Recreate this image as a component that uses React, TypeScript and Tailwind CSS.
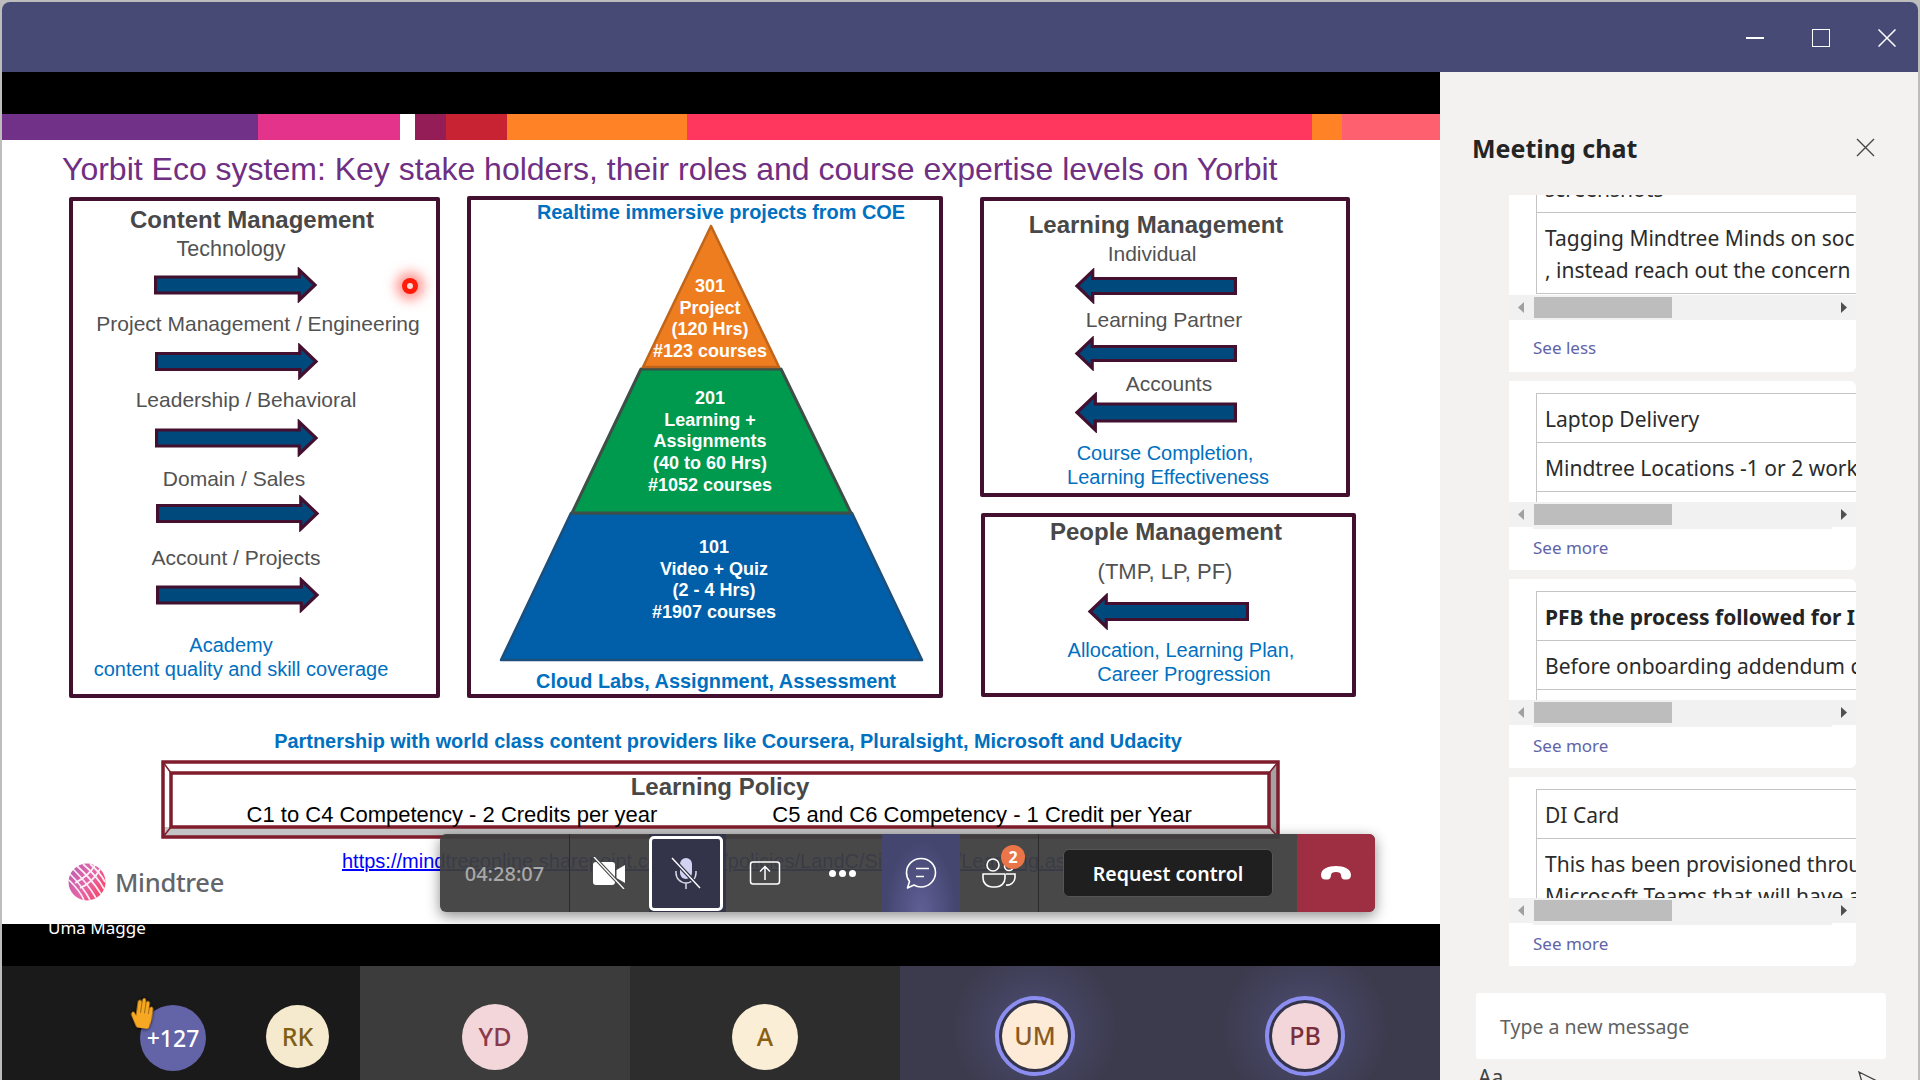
import { FaHandPaper } from "react-icons/fa";

const ARROW_STROKE = "#43102f";
const ARROW_FILL = "#00497c";

// block arrow from the slide, drawn inside its own box
function Arrow({ className, w, h, shaft, flip }: { className: string; w: number; h: number; shaft: number; flip?: boolean }) {
  const top = (h - shaft) / 2;
  const head = h * 0.52;
  const pts = [
    [1.5, top + 1.5],
    [w - head, top + 1.5],
    [w - head, 3],
    [w - 3, h / 2],
    [w - head, h - 3],
    [w - head, h - top - 1.5],
    [1.5, h - top - 1.5],
  ];
  const points = pts.map(([x, y]) => `${flip ? w - x : x},${y}`).join(" ");
  return (
    <svg className={className} width={w} height={h} viewBox={`0 0 ${w} ${h}`}>
      <polygon points={points} fill={ARROW_FILL} stroke={ARROW_STROKE} strokeWidth="3.2" />
    </svg>
  );
}

function Slide() {
  const label = "absolute -translate-x-1/2 -translate-y-1/2 whitespace-nowrap";
  const grey = "text-[21px] text-[#525252]";
  const head = "text-[24px] font-bold text-[#484848]";
  const blue = "text-[20px] text-[#0070c0]";
  const blueBold = "text-[19.9px] font-bold text-[#0070c0]";
  const frame = "absolute border-4 border-[#43102f] rounded-[2px]";

  return (
    <div className="relative h-[810px] bg-white overflow-hidden font-['Liberation_Sans',Arial,sans-serif]">
      {/* colour band */}
      <div className="flex h-[26px]">
        <div className="w-[256px] bg-[#723189]" />
        <div className="w-[142px] bg-[#e3338b]" />
        <div className="w-[15px] bg-white" />
        <div className="w-[31px] bg-[#951d57]" />
        <div className="w-[61px] bg-[#c82333]" />
        <div className="w-[180px] bg-[#ff8226]" />
        <div className="w-[625px] bg-[#ff365d]" />
        <div className="w-[30px] bg-[#ff8226]" />
        <div className="flex-1 bg-[#ff6070]" />
      </div>

      <div className="absolute left-[60px] top-[55px] -translate-y-1/2 whitespace-nowrap text-[32px] text-[#6f2f83]">
        Yorbit Eco system: Key stake holders, their roles and course expertise levels on Yorbit
      </div>

      {/* content management */}
      <div className={`${frame} left-[67px] top-[83px] w-[371px] h-[501px]`} />
      <div className={`${label} ${head} left-[250px] top-[106px]`}>Content Management</div>
      <div className={`${label} text-[21.5px] text-[#525252] left-[229px] top-[135px]`}>Technology</div>
      <Arrow className="absolute left-[152px] top-[153px]" w={164} h={36} shaft={19} />
      <div className={`${label} ${grey} left-[256px] top-[210px]`}>Project Management / Engineering</div>
      <Arrow className="absolute left-[153px] top-[229px]" w={164} h={37} shaft={19} />
      <div className={`${label} ${grey} left-[244px] top-[286px]`}>Leadership / Behavioral</div>
      <Arrow className="absolute left-[153px] top-[305px]" w={164} h={38} shaft={19} />
      <div className={`${label} ${grey} left-[232px] top-[365px]`}>Domain / Sales</div>
      <Arrow className="absolute left-[154px] top-[381px]" w={164} h={37} shaft={19} />
      <div className={`${label} ${grey} left-[234px] top-[444px]`}>Account / Projects</div>
      <Arrow className="absolute left-[154px] top-[463px]" w={164} h={36} shaft={19} />
      <div className={`${label} ${blue} left-[229px] top-[531px]`}>Academy</div>
      <div className={`${label} ${blue} left-[239px] top-[555px]`}>content quality and skill coverage</div>

      {/* pyramid */}
      <div className={`${frame} left-[465px] top-[82px] w-[476px] h-[502px]`} />
      <div className={`${label} ${blueBold} left-[719px] top-[99px]`}>Realtime immersive projects from COE</div>
      <svg className="absolute left-[488px] top-[101px]" width="440" height="455" viewBox="490 215 440 455">
        <polygon points="501,660 571,513 852,513 922,660" fill="#005fa8" stroke="#1d4f7c" strokeWidth="2.5" strokeLinejoin="round" />
        <polygon points="572,513 641,369 781,369 851,513" fill="#009a4f" stroke="#3d4f47" strokeWidth="3" strokeLinejoin="round" />
        <polygon points="711,226 643,367 779,367" fill="#ed7d1f" stroke="#bf651c" strokeWidth="2.5" strokeLinejoin="round" />
      </svg>
      <div className={`${label} left-[708px] top-[205px] text-center text-[18px] font-bold leading-[21.7px] text-white`}>
        301<br />Project<br />(120 Hrs)<br />#123 courses
      </div>
      <div className={`${label} left-[708px] top-[328px] text-center text-[18px] font-bold leading-[21.7px] text-white`}>
        201<br />Learning +<br />Assignments<br />(40 to 60 Hrs)<br />#1052 courses
      </div>
      <div className={`${label} left-[712px] top-[466px] text-center text-[18px] font-bold leading-[21.7px] text-white`}>
        101<br />Video + Quiz<br />(2 - 4 Hrs)<br />#1907 courses
      </div>
      <div className={`${label} ${blueBold} left-[714px] top-[568px]`}>Cloud Labs, Assignment, Assessment</div>

      {/* learning management */}
      <div className={`${frame} left-[978px] top-[83px] w-[370px] h-[300px]`} />
      <div className={`${label} ${head} left-[1154px] top-[111px]`}>Learning Management</div>
      <div className={`${label} ${grey} left-[1150px] top-[140px]`}>Individual</div>
      <Arrow className="absolute left-[1072px] top-[154px]" w={163} h={36} shaft={18} flip />
      <div className={`${label} ${grey} left-[1162px] top-[206px]`}>Learning Partner</div>
      <Arrow className="absolute left-[1072px] top-[222px]" w={163} h={35} shaft={17} flip />
      <div className={`${label} ${grey} left-[1167px] top-[270px]`}>Accounts</div>
      <Arrow className="absolute left-[1072px] top-[278px]" w={163} h={41} shaft={20} flip />
      <div className={`${label} ${blue} left-[1163px] top-[339px]`}>Course Completion,</div>
      <div className={`${label} ${blue} left-[1166px] top-[363px]`}>Learning Effectiveness</div>

      {/* people management */}
      <div className={`${frame} left-[979px] top-[399px] w-[375px] h-[184px]`} />
      <div className={`${label} ${head} left-[1164px] top-[418px]`}>People Management</div>
      <div className={`${label} text-[22px] text-[#525252] left-[1163px] top-[457px]`}>(TMP, LP, PF)</div>
      <Arrow className="absolute left-[1085px] top-[479px]" w={162} h={37} shaft={19} flip />
      <div className={`${label} ${blue} left-[1179px] top-[536px]`}>Allocation, Learning Plan,</div>
      <div className={`${label} ${blue} left-[1182px] top-[560px]`}>Career Progression</div>

      <div className={`${label} ${blueBold} left-[726px] top-[628px]`}>
        Partnership with world class content providers like Coursera, Pluralsight, Microsoft and Udacity
      </div>

      {/* learning policy bevel */}
      <svg className="absolute left-[158px] top-[645px]" width="1122" height="81" viewBox="160 759 1122 81">
        <rect x="163" y="762" width="1115" height="75" fill="#ffffff" />
        <polygon points="163,827 171,827 1269,827 1278,837 163,837" fill="#c4c4c4" />
        <polygon points="1269,773 1278,762 1278,837 1269,827" fill="#a3a3a3" />
        <rect x="163" y="762" width="1115" height="75" fill="none" stroke="#7f1d2c" strokeWidth="3.5" />
        <rect x="171" y="773" width="1098" height="54" fill="#ffffff" stroke="#7f1d2c" strokeWidth="3.5" />
        <path d="M163 762 L171 773 M1278 762 L1269 773 M163 837 L171 827 M1278 837 L1269 827" stroke="#7f1d2c" strokeWidth="1.5" />
      </svg>
      <div className={`${label} ${head} left-[718px] top-[673px]`}>Learning Policy</div>
      <div className={`${label} left-[450px] top-[700px] text-[22px] text-black`}>C1 to C4 Competency - 2 Credits per year</div>
      <div className={`${label} left-[980px] top-[700px] text-[22px] text-black`}>C5 and C6 Competency - 1 Credit per Year</div>

      {/* logo */}
      <svg className="absolute left-[66px] top-[749px]" width="38" height="38" viewBox="0 0 38 38">
        <defs>
          <linearGradient id="globe" x1="0" y1="0" x2="1" y2="0.6">
            <stop offset="0" stopColor="#b85cb0" />
            <stop offset="0.6" stopColor="#e565a8" />
            <stop offset="1" stopColor="#f6476d" />
          </linearGradient>
        </defs>
        <circle cx="19" cy="19" r="18.5" fill="url(#globe)" />
        <g fill="none" stroke="#ffffff" strokeWidth="1.7" opacity="0.9">
          <path d="M1 17 C8 24 13 30 16 37" />
          <path d="M2 11 C10 19 18 29 22 37" />
          <path d="M5 6 C14 15 23 26 28 35" />
          <path d="M9 3 C18 11 28 23 33 31" />
          <path d="M15 1 C23 8 32 18 36 26" />
          <path d="M22 1 C28 6 34 13 37 19" />
          <path d="M27 2 C24 8 18 14 7 20" />
          <path d="M32 6 C28 14 20 22 12 25" />
        </g>
      </svg>
      <div className="absolute left-[113px] top-[768px] -translate-y-1/2 font-['Noto_Sans',sans-serif] text-[25.5px] font-medium tracking-[-0.3px] text-[#63656a]">
        Mindtree
      </div>
      <div className="absolute left-[340px] top-[747px] -translate-y-1/2 whitespace-nowrap text-[20px] text-[#0000ff] underline">
        https://mindtreeonline.sharepoint.com/sites/policies/LandC/SitePages/Learning.aspx
      </div>

      {/* laser pointer */}
      <div className="absolute left-[400px] top-[164px] flex h-[16px] w-[16px] items-center justify-center rounded-full bg-[#ff1a0a] shadow-[0_0_12px_6px_rgba(255,70,60,0.55)]">
        <div className="h-[6px] w-[6px] rounded-full bg-[#ffd9d5]" />
      </div>
    </div>
  );
}

function CameraOff() {
  return (
    <svg width="32" height="32" viewBox="0 0 32 32">
      <rect x="0" y="5" width="22" height="23" rx="3" fill="#fff" />
      <path d="M23.5 13 L32 8 V26 L23.5 21 Z" fill="#fff" />
      <path d="M1 0 L31 32" stroke="#454545" strokeWidth="3.4" />
      <path d="M1 0 L31 32" stroke="#fff" strokeWidth="1.3" />
    </svg>
  );
}

function MicOff() {
  return (
    <svg width="32" height="32" viewBox="0 0 32 32" fill="none">
      <rect x="10" y="1" width="12" height="21" rx="6" fill="#d2d3f0" />
      <path d="M6 14 V16 A10 10 0 0 0 26 16 V14 M16 26 V32" stroke="#d8d8e8" strokeWidth="1.5" />
      <path d="M2 1 L30 31" stroke="#33344a" strokeWidth="4" />
      <path d="M2 1 L30 31" stroke="#fff" strokeWidth="1.4" />
    </svg>
  );
}

function ShareIcon() {
  return (
    <svg width="32" height="24" viewBox="0 0 32 24" fill="none" stroke="#fff" strokeWidth="1.5">
      <rect x="1.5" y="1" width="29" height="22" rx="2.5" />
      <path d="M16 19 V6 M11 10.5 L16 5.5 L21 10.5" />
    </svg>
  );
}

function ChatIcon() {
  return (
    <svg width="32" height="32" viewBox="0 0 32 32" fill="none" stroke="#fff" strokeWidth="1.6">
      <path d="M16 1.5 C24.5 1.5 30.5 8 30.5 15.5 C30.5 23.5 24 30 16 30 C13.5 30 11 29.3 9 28 L2.5 31 L4.5 24.5 C2.5 22 1.5 19 1.5 15.5 C1.5 8 8 1.5 16 1.5 Z" strokeLinejoin="round" />
      <path d="M11 11.5 H24 M11 19.5 H19" />
    </svg>
  );
}

function PeopleIcon() {
  return (
    <svg width="34" height="30" viewBox="0 0 34 30" fill="none" stroke="#fff" strokeWidth="1.6">
      <circle cx="11" cy="7" r="6" />
      <circle cx="27" cy="8" r="4.5" />
      <path d="M1 16 H23 V20 A9 9 0 0 1 14 29 H10 A9 9 0 0 1 1 20 Z" strokeLinejoin="round" />
      <path d="M24 16 H33 V20 A8 8 0 0 1 24 27" />
    </svg>
  );
}

function HangUp() {
  return (
    <svg width="32" height="14" viewBox="0 0 32 14">
      <path d="M1 9 C1 3 8 0 16 0 C24 0 31 3 31 9 C31 12 29 13.5 27 13.5 H24 C22 13.5 21 11 21 9 C21 7 19 6 16 6 C13 6 11 7 11 9 C11 11 10 13.5 8 13.5 H5 C3 13.5 1 12 1 9 Z" fill="#fff" />
    </svg>
  );
}

function Toolbar() {
  return (
    <div className="absolute left-[438px] top-[762px] z-10 flex h-[78px] w-[935px] rounded-md bg-[#3e3e3e]/95 text-white shadow-[0_4px_14px_rgba(0,0,0,0.45)] font-['Noto_Sans',sans-serif]">
      <div className="flex w-[130px] items-center justify-center border-r border-[#2b2b2b] pt-[2px] text-[20px] font-medium text-[#a9a9a9]">
        04:28:07
      </div>
      <div className="flex w-[79px] items-center justify-center pr-[2px]">
        <CameraOff />
      </div>
      <div className="flex w-[77px] items-center bg-[#33344a]">
        <div className="flex h-[75px] w-[74px] items-center justify-center rounded-[5px] border-[3px] border-white bg-[#33344a]">
          <MicOff />
        </div>
      </div>
      <div className="flex w-[77px] items-center justify-center">
        <ShareIcon />
      </div>
      <div className="flex w-[79px] items-center justify-center gap-[3px]">
        <span className="h-[7px] w-[7px] rounded-full bg-white" />
        <span className="h-[7px] w-[7px] rounded-full bg-white" />
        <span className="h-[7px] w-[7px] rounded-full bg-white" />
      </div>
      <div className="flex w-[78px] items-center justify-center bg-[radial-gradient(ellipse_at_50%_100%,#5f5f96_0%,#44466f_65%)]">
        <ChatIcon />
      </div>
      <div className="relative flex w-[79px] items-center justify-center border-r border-[#2b2b2b]">
        <PeopleIcon />
        <span className="absolute left-[41px] top-[11px] flex h-[24px] w-[24px] items-center justify-center rounded-full bg-[#e97548] text-[16px] font-bold">
          2
        </span>
      </div>
      <div className="flex flex-1 items-center pl-[24px]">
        <button className="h-[48px] w-[210px] rounded-md border border-[#555] bg-[#1f1f1f] pt-[2px] text-[19.5px] font-semibold text-white">
          Request control
        </button>
      </div>
      <div className="flex w-[78px] items-center justify-center rounded-r-md bg-[#9e2e41]">
        <HangUp />
      </div>
    </div>
  );
}

function Avatar({ text, className }: { text: string; className: string }) {
  return (
    <div className={`flex h-[66px] w-[66px] shrink-0 items-center justify-center rounded-full font-medium ${className}`}>
      {text}
    </div>
  );
}

function SpeakingAvatar({ text, className }: { text: string; className: string }) {
  return (
    <div className="flex h-[80px] w-[80px] items-center justify-center rounded-full border-[4px] border-[#8b8ef0] bg-[#33334a]">
      <Avatar text={text} className={`text-[25px] ${className}`} />
    </div>
  );
}

function Strip() {
  return (
    <div className="flex flex-1 font-['Noto_Sans',sans-serif]">
      <div className="relative flex w-[358px] items-start bg-[#1a1a1a] pl-[138px] pt-[39px]">
        <Avatar text="+127" className="text-[23px] bg-[#6264a7] text-white" />
        <Avatar text="RK" className="ml-[60px] !h-[63px] !w-[63px] text-[25px] bg-[#f5e9ce] text-[#7f5f14]" />
        <FaHandPaper className="absolute left-[125px] top-[32px] scale-x-[0.8] rotate-[8deg] text-[#f7a823] drop-shadow-[0_0_2px_#000]" size={30} />
      </div>
      <div className="flex w-[270px] items-start justify-center bg-[#3c3c3c] pt-[38px]">
        <Avatar text="YD" className="text-[25px] bg-[#f2d6d9] text-[#8a3a4a]" />
      </div>
      <div className="flex w-[270px] items-start justify-center bg-[#2d2d2d] pt-[38px]">
        <Avatar text="A" className="text-[25px] bg-[#fbeed6] text-[#8a5f14]" />
      </div>
      <div className="flex w-[270px] items-start justify-center bg-[radial-gradient(circle_at_50%_55%,#4d4d75_0%,#3c3b4e_55%)] pt-[30px]">
        <SpeakingAvatar text="UM" className="bg-[#fdebd8] text-[#8a5a24]" />
      </div>
      <div className="flex w-[270px] items-start justify-center bg-[radial-gradient(circle_at_50%_55%,#4d4d75_0%,#3c3b4e_55%)] pt-[30px]">
        <SpeakingAvatar text="PB" className="bg-[#f2d6d9] text-[#7a2e3c]" />
      </div>
    </div>
  );
}

function Scrollbar() {
  return (
    <div className="flex h-[25px] items-center bg-[#f1f1f1] px-[9px]">
      <svg width="6" height="11" viewBox="0 0 6 11">
        <path d="M6 0 V11 L0 5.5 Z" fill="#a0a0a0" />
      </svg>
      <div className="ml-[10px] h-[21px] w-[138px] bg-[#bdbdbd]" />
      <svg className="ml-auto" width="6" height="11" viewBox="0 0 6 11">
        <path d="M0 0 V11 L6 5.5 Z" fill="#505050" />
      </svg>
    </div>
  );
}

function Row({ lines, bold }: { lines: string[]; bold?: boolean }) {
  return (
    <div className={`border-b border-[#c4c4c4] px-[8px] pt-[9px] pb-[7px] text-[21px] leading-[32px] whitespace-nowrap ${bold ? "font-bold text-[#242424]" : "text-[#2b2b2b]"}`}>
      {lines.map((l) => (
        <div key={l}>{l}</div>
      ))}
    </div>
  );
}

function Card({ rows }: { rows: { lines: string[]; bold?: boolean }[] }) {
  return (
    <div className="h-[189px] rounded-r-md bg-white">
      <div className="h-[121px] overflow-hidden pl-[27px] pt-[12px]">
        <div className="w-[600px] border-l border-t border-[#c4c4c4] pb-[80px]">
          {rows.map((r) => (
            <Row key={r.lines[0]} lines={r.lines} bold={r.bold} />
          ))}
        </div>
      </div>
      <Scrollbar />
      <div className="mx-[24px] h-[2px] bg-[#f1f1f1]" />
      <div className="pl-[24px] pt-[7px] text-[17px] leading-[24px] text-[#6264a7]">See more</div>
    </div>
  );
}

function ChatPanel() {
  return (
    <div className="flex w-[478px] flex-col overflow-hidden bg-[#f3f2f1] font-['Noto_Sans',sans-serif]">
      <div className="flex h-[123px] shrink-0 items-start justify-between pl-[32px] pr-[43px] pt-[58px]">
        <div className="text-[25px] font-bold leading-[36px] text-[#242424]">Meeting chat</div>
        <svg className="mt-[8px]" width="19" height="19" viewBox="0 0 19 19" stroke="#484848" strokeWidth="1.4">
          <path d="M1 1 L18 18 M18 1 L1 18" />
        </svg>
      </div>

      <div className="ml-[69px] flex w-[347px] flex-col gap-[9px]">
        <div className="h-[177px] rounded-br-md bg-white">
          <div className="h-[100px] overflow-hidden pl-[27px]">
            <div className="-mt-[31px] w-[600px] border-l border-[#c4c4c4]">
              <Row lines={["screenshots"]} />
              <Row lines={["Tagging Mindtree Minds on social media", ", instead reach out the concern"]} />
            </div>
          </div>
          <Scrollbar />
          <div className="pl-[24px] pt-[16px] text-[17px] leading-[24px] text-[#6264a7]">See less</div>
        </div>
        <Card rows={[{ lines: ["Laptop Delivery"] }, { lines: ["Mindtree Locations -1 or 2 working days"] }]} />
        <Card rows={[{ lines: ["PFB the process followed for ID Card"], bold: true }, { lines: ["Before onboarding addendum contract"] }]} />
        <Card rows={[{ lines: ["DI Card"] }, { lines: ["This has been provisioned through", "Microsoft Teams that will have a"] }]} />
      </div>

      <div className="ml-[36px] mt-[27px] flex h-[66px] w-[410px] shrink-0 items-center rounded-[3px] bg-white pl-[24px] pt-[2px] text-[19.5px] text-[#616161]">
        Type a new message
      </div>
      <div className="ml-[38px] mr-[38px] mt-[6px] flex items-start justify-between">
        <span className="text-[21px] leading-[24px] text-[#424242]">Aa</span>
        <svg className="mt-[6px]" width="22" height="22" viewBox="0 0 22 22" fill="none" stroke="#424242" strokeWidth="1.3">
          <path d="M1 1 L21 11 L1 21 L4 11 Z M4 11 H21" />
        </svg>
      </div>
    </div>
  );
}

export default function App() {
  return (
    <div className="h-[1080px] w-[1920px] overflow-hidden bg-[#bdbdbd] px-[2px] pt-[2px]">
      <div className="flex h-full flex-col overflow-hidden rounded-t-lg">
        {/* title bar */}
        <div className="flex h-[70px] shrink-0 items-center justify-end bg-[#474a75] pr-[22px] pt-[2px]">
          <div className="mr-[48px] h-[1.5px] w-[18px] bg-white" />
          <div className="mr-[48px] h-[18px] w-[18px] border-[1.5px] border-white" />
          <svg width="18" height="18" viewBox="0 0 18 18" stroke="#fff" strokeWidth="1.5">
            <path d="M0.5 0.5 L17.5 17.5 M17.5 0.5 L0.5 17.5" />
          </svg>
        </div>

        <div className="flex min-h-0 flex-1">
          <div className="relative flex w-[1438px] flex-col bg-black">
            <div className="h-[42px] shrink-0" />
            <Slide />
            <div className="h-[42px] shrink-0 overflow-hidden pl-[46px]">
              <div className="-mt-[8px] font-['Noto_Sans',sans-serif] text-[17px] leading-[24px] text-white">Uma Magge</div>
            </div>
            <Strip />
            <Toolbar />
          </div>
          <ChatPanel />
        </div>
      </div>
    </div>
  );
}
